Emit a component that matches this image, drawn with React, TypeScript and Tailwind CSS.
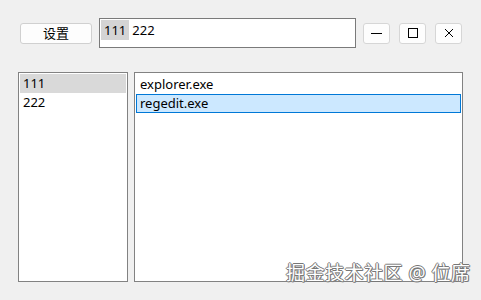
import React from "react";

const font = { fontFamily: '"Noto Sans", "Noto Sans CJK SC", sans-serif' };

function WinBtn({ children }: { children: React.ReactNode }) {
  return (
    <div className="w-[27px] h-[21px] rounded-[3px] border border-[#d6d6d6] bg-[#fdfdfd] flex items-center justify-center">
      {children}
    </div>
  );
}

export default function App() {
  return (
    <div className="relative w-[481px] h-[300px] bg-[#f0f0f0] overflow-hidden text-[13px] text-black" style={font}>
      <div className="flex items-center pt-[18px] pl-[20px]">
        <div className="w-[72px] h-[21px] rounded-[3px] border border-[#d0d0d0] bg-[#fdfdfd] flex items-center justify-center text-[13px] leading-none">
          设置
        </div>
        <div className="ml-[7px] w-[257px] h-[30px] border border-[#7a7a7a] bg-white flex items-start pt-[1px] pl-[1px]">
          <span className="h-[20px] px-[3px] bg-[#d4d4d4] flex items-center leading-none text-[13px]">111</span>
          <span className="h-[20px] ml-[3px] flex items-center leading-none text-[13px]">222</span>
        </div>
        <div className="ml-[7px] flex gap-[9px]">
          <WinBtn>
            <div className="w-[11px] h-[1px] bg-black" />
          </WinBtn>
          <WinBtn>
            <div className="w-[10px] h-[10px] border border-black" />
          </WinBtn>
          <WinBtn>
            <svg width="10" height="10" viewBox="0 0 10 10">
              <path d="M1 1 L9 9 M9 1 L1 9" stroke="black" strokeWidth="1" />
            </svg>
          </WinBtn>
        </div>
      </div>
      <div className="flex mt-[24px] pl-[18px] gap-[6px]">
        <div className="w-[110px] h-[210px] border border-[#828282] bg-white p-[1px]">
          <div className="h-[19px] bg-[#d9d9d9] flex items-center pl-[3px] leading-none">111</div>
          <div className="h-[19px] flex items-center pl-[3px] leading-none">222</div>
        </div>
        <div className="w-[329px] h-[210px] border border-[#828282] bg-white p-[1px]">
          <div className="h-[20px] flex items-center pl-[4px] leading-none">explorer.exe</div>
          <div className="h-[19px] border border-[#0078d7] bg-[#cce8ff] flex items-center pl-[3px] leading-none">regedit.exe</div>
        </div>
      </div>
      <div
        className="absolute left-[286px] top-[264px] text-[19px] leading-none text-white whitespace-nowrap tracking-[0.5px]"
        style={{
          ...font,
          textShadow:
            "1px 0 0 #777, -1px 0 0 #777, 0 1px 0 #777, 0 -1px 0 #777, 1px 1px 0 #888",
        }}
      >
        掘金技术社区 @ 位席
      </div>
    </div>
  );
}
